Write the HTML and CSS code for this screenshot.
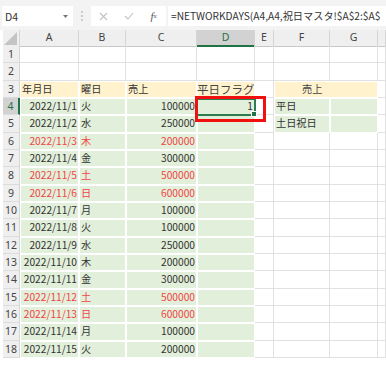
FILE: index.html
```html
<!DOCTYPE html>
<html lang="ja">
<head>
  <meta charset="UTF-8">
  <meta name="viewport" content="width=device-width, initial-scale=1.0">
  <title>NETWORKDAYS</title>
  <link rel="stylesheet" href="styles.css">
</head>
<body>
  <!-- 数式バー -->
  <div class="formula-bar">
    <div class="name-box">
      <span>D4</span>
      <svg width="5" height="3" viewBox="0 0 5 3"><path d="M0 0h5L2.5 3z" fill="#777"/></svg>
    </div>
    <div class="grip">
      <svg width="2" height="12" viewBox="0 0 2 12"><circle cx="1" cy="2" r="0.9" fill="#bbb"/><circle cx="1" cy="6" r="0.9" fill="#bbb"/><circle cx="1" cy="10" r="0.9" fill="#bbb"/></svg>
    </div>
    <div class="fx-box">
      <span class="btn"><svg width="9" height="9" viewBox="0 0 9 9"><path d="M1 1l7 7M8 1L1 8" stroke="#c2c2c2" stroke-width="1.1"/></svg></span>
      <span class="btn"><svg width="10" height="8" viewBox="0 0 10 8"><path d="M1 4l3 3 5-6" stroke="#c2c2c2" stroke-width="1.1" fill="none"/></svg></span>
      <span class="btn fx">f<sub>x</sub></span>
    </div>
    <div class="formula">=NETWORKDAYS(A4,A4,祝日マスタ!$A$2:$A$</div>
  </div>

  <div class="sheet">
    <div class="row heads">
      <div class="ch corner"><svg width="13" height="13" viewBox="0 0 13 13"><path d="M13 0V13H0z" fill="#c4c4c4"/></svg></div>
      <div class="ch">A</div><div class="ch">B</div><div class="ch">C</div><div class="ch sel">D</div>
      <div class="ch">E</div><div class="ch">F</div><div class="ch">G</div><div class="ch"></div>
    </div>

    <div class="row">
      <div class="rh">1</div><div class="c"></div><div class="c"></div><div class="c"></div><div class="c"></div>
      <div class="c"></div><div class="c"></div><div class="c"></div><div class="c"></div>
    </div>
    <div class="row">
      <div class="rh">2</div><div class="c"></div><div class="c"></div><div class="c"></div><div class="c"></div>
      <div class="c"></div><div class="c"></div><div class="c"></div><div class="c"></div>
    </div>
    <div class="row">
      <div class="rh">3</div><div class="c y">年月日</div><div class="c y">曜日</div><div class="c y">売上</div><div class="c y big">平日フラグ</div>
      <div class="c"></div><div class="c y merged">売上</div><div class="c"></div>
    </div>
    <div class="row">
      <div class="rh sel">4</div><div class="c g r">2022/11/1</div><div class="c g">火</div><div class="c g r">100000</div>
      <div class="c g r active">1<span class="cursor"></span><span class="mark"></span></div>
      <div class="c"></div><div class="c g">平日</div><div class="c g"></div><div class="c"></div>
    </div>
    <div class="row">
      <div class="rh">5</div><div class="c g r">2022/11/2</div><div class="c g">水</div><div class="c g r">250000</div><div class="c g"></div>
      <div class="c"></div><div class="c g">土日祝日</div><div class="c g"></div><div class="c"></div>
    </div>
    <div class="row">
      <div class="rh">6</div><div class="c g r red">2022/11/3</div><div class="c g red">木</div><div class="c g r red">200000</div><div class="c g"></div>
      <div class="c"></div><div class="c"></div><div class="c"></div><div class="c"></div>
    </div>
    <div class="row">
      <div class="rh">7</div><div class="c g r">2022/11/4</div><div class="c g">金</div><div class="c g r">300000</div><div class="c g"></div>
      <div class="c"></div><div class="c"></div><div class="c"></div><div class="c"></div>
    </div>
    <div class="row">
      <div class="rh">8</div><div class="c g r red">2022/11/5</div><div class="c g red">土</div><div class="c g r red">500000</div><div class="c g"></div>
      <div class="c"></div><div class="c"></div><div class="c"></div><div class="c"></div>
    </div>
    <div class="row">
      <div class="rh">9</div><div class="c g r red">2022/11/6</div><div class="c g red">日</div><div class="c g r red">600000</div><div class="c g"></div>
      <div class="c"></div><div class="c"></div><div class="c"></div><div class="c"></div>
    </div>
    <div class="row">
      <div class="rh">10</div><div class="c g r">2022/11/7</div><div class="c g">月</div><div class="c g r">100000</div><div class="c g"></div>
      <div class="c"></div><div class="c"></div><div class="c"></div><div class="c"></div>
    </div>
    <div class="row">
      <div class="rh">11</div><div class="c g r">2022/11/8</div><div class="c g">火</div><div class="c g r">100000</div><div class="c g"></div>
      <div class="c"></div><div class="c"></div><div class="c"></div><div class="c"></div>
    </div>
    <div class="row">
      <div class="rh">12</div><div class="c g r">2022/11/9</div><div class="c g">水</div><div class="c g r">250000</div><div class="c g"></div>
      <div class="c"></div><div class="c"></div><div class="c"></div><div class="c"></div>
    </div>
    <div class="row">
      <div class="rh">13</div><div class="c g r">2022/11/10</div><div class="c g">木</div><div class="c g r">200000</div><div class="c g"></div>
      <div class="c"></div><div class="c"></div><div class="c"></div><div class="c"></div>
    </div>
    <div class="row">
      <div class="rh">14</div><div class="c g r">2022/11/11</div><div class="c g">金</div><div class="c g r">300000</div><div class="c g"></div>
      <div class="c"></div><div class="c"></div><div class="c"></div><div class="c"></div>
    </div>
    <div class="row">
      <div class="rh">15</div><div class="c g r red">2022/11/12</div><div class="c g red">土</div><div class="c g r red">500000</div><div class="c g"></div>
      <div class="c"></div><div class="c"></div><div class="c"></div><div class="c"></div>
    </div>
    <div class="row">
      <div class="rh">16</div><div class="c g r red">2022/11/13</div><div class="c g red">日</div><div class="c g r red">600000</div><div class="c g"></div>
      <div class="c"></div><div class="c"></div><div class="c"></div><div class="c"></div>
    </div>
    <div class="row">
      <div class="rh">17</div><div class="c g r">2022/11/14</div><div class="c g">月</div><div class="c g r">100000</div><div class="c g"></div>
      <div class="c"></div><div class="c"></div><div class="c"></div><div class="c"></div>
    </div>
    <div class="row">
      <div class="rh">18</div><div class="c g r">2022/11/15</div><div class="c g">火</div><div class="c g r">200000</div><div class="c g"></div>
      <div class="c"></div><div class="c"></div><div class="c"></div><div class="c"></div>
    </div>
  </div>
</body>
</html>
```

FILE: styles.css
```css
* {
  box-sizing: border-box;
}
body {
  margin: 0;
  font-family: "Noto Sans CJK JP", "Noto Sans", sans-serif;
  color: #333;
  background: #fff;
  overflow: hidden;
}

/* 数式バー */
.formula-bar {
  display: flex;
  align-items: flex-start;
  height: 30px;
  padding: 6px 0 0 2px;
  background: #f3f3f3;
}
.name-box {
  display: flex;
  align-items: center;
  justify-content: space-between;
  width: 71px;
  height: 20px;
  padding: 0 5px 0 3px;
  background: #fff;
  font-size: 10.5px;
}
.grip {
  display: flex;
  align-items: center;
  justify-content: center;
  width: 18px;
  height: 20px;
}
.fx-box {
  display: flex;
  width: 75px;
  height: 20px;
  background: #fff;
}
.fx-box .btn {
  display: flex;
  align-items: center;
  justify-content: center;
  width: 25px;
}
.fx-box .fx {
  font-family: "Liberation Serif", serif;
  font-style: italic;
  font-size: 11px;
  color: #555;
}
.fx-box .fx sub {
  font-size: 7px;
}
.formula {
  flex: 1;
  height: 20px;
  margin-left: 2px;
  padding-left: 3px;
  background: #fff;
  font-size: 10.2px;
  line-height: 20px;
  white-space: nowrap;
}

/* シート */
.sheet {
  padding-left: 3px;
}
.row {
  display: grid;
  grid-template-columns: 17px 59px 47px 71px 58px 19px 56px 48px 1fr;
  height: 17.333px;
}
.row.heads {
  height: 16px;
}
.ch {
  background: #efefef;
  border-right: 1px solid #d6d6d6;
  border-bottom: 1px solid #c9c9c9;
  font-family: "Noto Sans", sans-serif;
  font-size: 10.5px;
  line-height: 15px;
  text-align: center;
  color: #444;
}
.ch.corner {
  display: flex;
  align-items: flex-end;
  justify-content: flex-end;
  padding: 0 2px 1px 0;
}
.ch.sel {
  background: #d2d2d2;
  border-bottom: 2px solid #217346;
  color: #217346;
}
.rh {
  background: #efefef;
  border-right: 1px solid #d6d6d6;
  border-bottom: 1px solid #dcdcdc;
  font-family: "Noto Sans", sans-serif;
  font-size: 10.5px;
  line-height: 16px;
  text-align: center;
  color: #444;
}
.rh.sel {
  background: #d2d2d2;
  border-right: 2px solid #217346;
  color: #217346;
}
.c {
  border-right: 1px solid #e1e1e1;
  border-bottom: 1px solid #e1e1e1;
  padding: 0 2px;
  font-size: 10.2px;
  line-height: 16px;
  white-space: nowrap;
}
.c.g,
.c.y {
  border-color: #fff;
  box-shadow: inset 1px 1px 0 #fff;
}
.c.g {
  background: #e2efda;
}
.c.y {
  background: #fff2cc;
}
.c.r {
  text-align: right;
  padding-right: 1px;
}
.c.red {
  color: #f04545;
}
.c.big {
  font-size: 11.5px;
  text-align: center;
  padding: 0;
  color: #444;
}
.c.merged {
  grid-column: span 2;
  padding-left: 28px;
  color: #444;
}

/* 選択セル */
.active {
  position: relative;
}
.cursor {
  position: absolute;
  left: -1px;
  top: 0;
  right: -2px;
  bottom: -2px;
  border: 2px solid #2e7d50;
}
.cursor::after {
  content: "";
  position: absolute;
  right: -3px;
  bottom: -3px;
  width: 4px;
  height: 4px;
  background: #217346;
  border: 1px solid #fff;
}
.mark {
  position: absolute;
  left: -2px;
  top: -2px;
  width: 71px;
  height: 26px;
  border: 3px solid #f01010;
}
```
